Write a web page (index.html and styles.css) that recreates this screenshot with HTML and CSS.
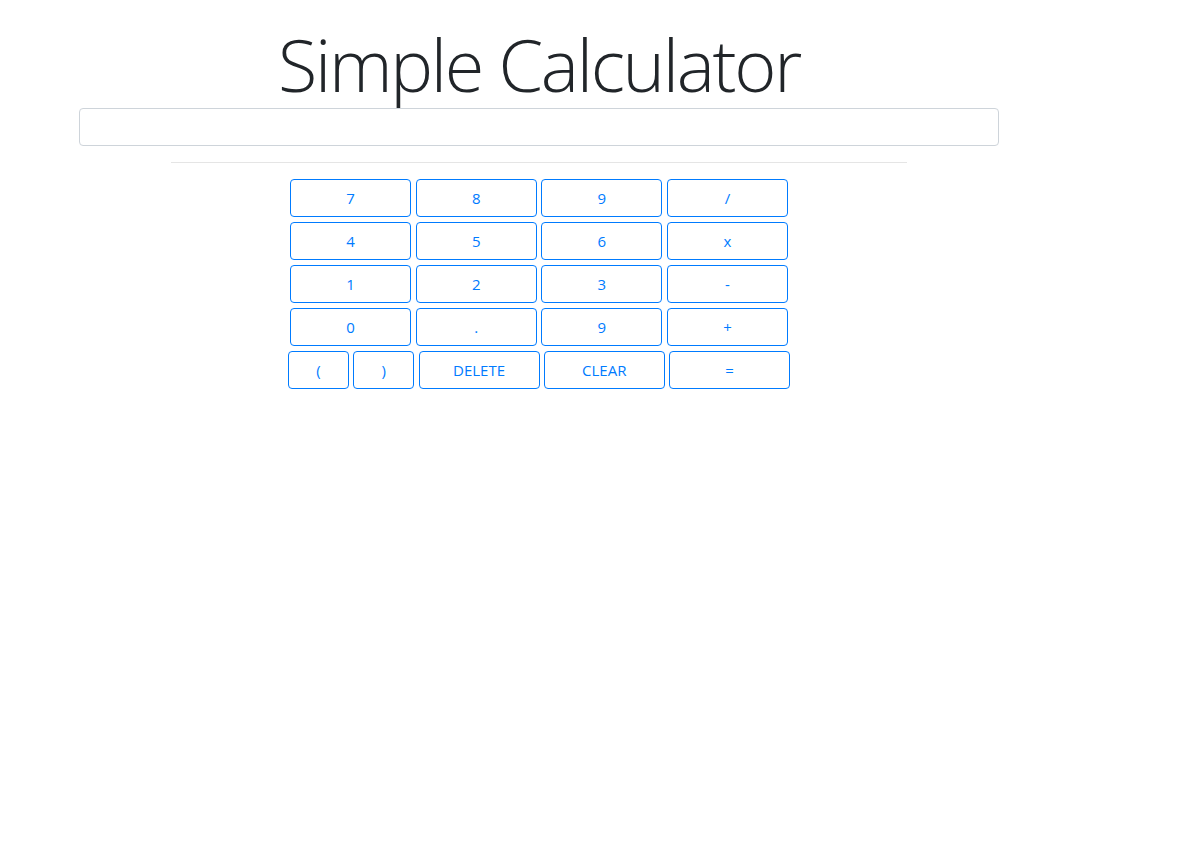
FILE: index.html
```html
<!DOCTYPE html>
<html>
<head>
<meta charset="utf-8">
<title>Simple Calculator</title>
<link rel="stylesheet" href="styles.css">
</head>
<body>
<div class="page">
  <h1 class="title">Simple Calculator</h1>
  <input class="display" type="text">
  <hr class="divider">
  <div class="keypad">
    <div class="keyrow">
      <button class="key">7</button>
      <button class="key">8</button>
      <button class="key">9</button>
      <button class="key">/</button>
    </div>
    <div class="keyrow">
      <button class="key">4</button>
      <button class="key">5</button>
      <button class="key">6</button>
      <button class="key">x</button>
    </div>
    <div class="keyrow">
      <button class="key">1</button>
      <button class="key">2</button>
      <button class="key">3</button>
      <button class="key">-</button>
    </div>
    <div class="keyrow">
      <button class="key">0</button>
      <button class="key">.</button>
      <button class="key">9</button>
      <button class="key">+</button>
    </div>
    <div class="keyrow last">
      <button class="key small">(</button>
      <button class="key small">)</button>
      <button class="key">DELETE</button>
      <button class="key">CLEAR</button>
      <button class="key">=</button>
    </div>
  </div>
</div>
</body>
</html>
```

FILE: styles.css
```css
html, body {
  margin: 0;
  padding: 0;
  background: #fff;
}
body {
  font-family: "Open Sans", "Noto Sans", sans-serif;
  color: #212529;
}
.page {
  width: 1078px;
  display: flex;
  flex-direction: column;
  align-items: center;
}
.title {
  margin: 21px 0 1px 0;
  font-size: 72px;
  font-weight: 300;
  line-height: 1.2;
  color: #212529;
  letter-spacing: -2.3px;
}
.display {
  box-sizing: border-box;
  width: 920px;
  height: 38px;
  border: 1px solid #ced4da;
  border-radius: 4px;
  background: #fff;
  padding: 6px 12px;
  font-size: 16px;
  margin: 0;
}
.divider {
  width: 736px;
  margin: 16px 0;
  border: 0;
  border-top: 1px solid rgba(0,0,0,0.1);
  height: 0;
}
.keypad {
  display: flex;
  flex-direction: column;
  align-items: center;
  gap: 5px;
}
.keyrow {
  display: flex;
  gap: 4.67px;
}
.keyrow.last {
  gap: 4.25px;
}
.key {
  box-sizing: border-box;
  width: 121px;
  height: 38px;
  border: 1px solid #007bff;
  border-radius: 4px;
  background: #fff;
  color: #007bff;
  font-family: "Open Sans", "Noto Sans", sans-serif;
  font-size: 15px;
  line-height: 24px;
  padding: 6px 12px;
  margin: 0;
}
.key.small {
  width: 61px;
}
```
